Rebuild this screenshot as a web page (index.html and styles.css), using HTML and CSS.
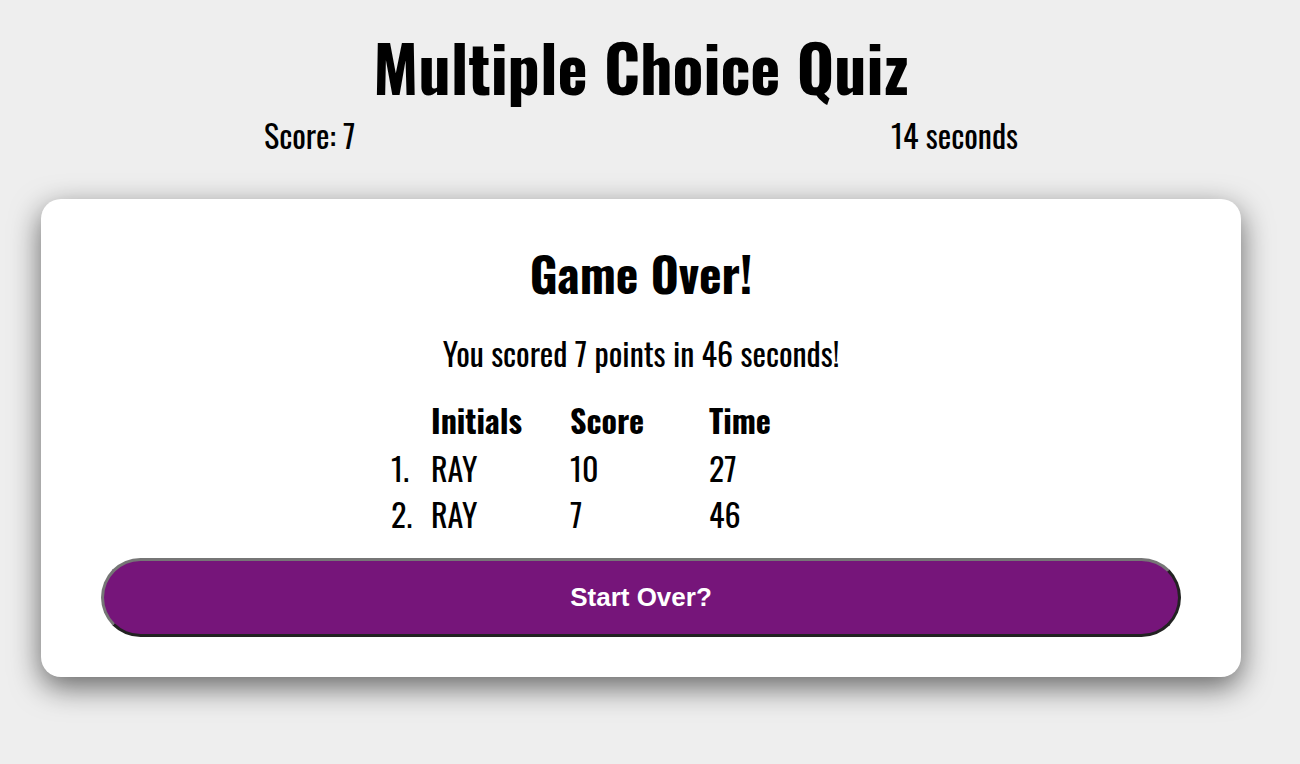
FILE: index.html
```html
<!DOCTYPE html>
<html lang="en">
<head>
<meta charset="utf-8">
<title>Multiple Choice Quiz</title>
<link rel="stylesheet" href="styles.css">
</head>
<body>
<div class="page">
  <header class="top">
    <h1 class="title">Multiple Choice Quiz</h1>
    <div class="status">
      <span class="score">Score: 7</span>
      <span class="timer">14 seconds</span>
    </div>
  </header>
  <main class="card">
    <h2 class="card-title">Game Over!</h2>
    <p class="summary">You scored 7 points in 46 seconds!</p>
    <div class="board">
      <div class="board-head">
        <span class="cell">Initials</span>
        <span class="cell">Score</span>
        <span class="cell">Time</span>
      </div>
      <ol class="board-list">
        <li class="board-row"><span class="cell">RAY</span><span class="cell">10</span><span class="cell">27</span></li>
        <li class="board-row"><span class="cell">RAY</span><span class="cell">7</span><span class="cell">46</span></li>
      </ol>
    </div>
    <button class="restart" type="button">Start Over?</button>
  </main>
</div>
</body>
</html>
```
FILE: styles.css
```css
html, body {
  margin: 0;
  padding: 0;
  background: #eeeeee;
}
body {
  font-family: "Oswald", "Roboto Condensed", sans-serif;
  color: #000;
}
.page {
  box-sizing: border-box;
  width: 1282px;
  min-height: 764px;
  padding-bottom: 80px;
  display: flex;
  flex-direction: column;
  align-items: center;
}
.top {
  display: flex;
  flex-direction: column;
  align-items: center;
}
.title {
  margin: 31px 0 0;
  font-size: 64px;
  font-weight: 700;
  line-height: 70px;
}
.status {
  width: 754px;
  display: flex;
  justify-content: space-between;
  font-size: 32px;
  font-weight: 400;
  line-height: 40px;
  margin-top: 14px;
}
.card {
  box-sizing: border-box;
  width: 1200px;
  margin-top: 44px;
  background: #fff;
  border-radius: 20px;
  box-shadow: 0 10px 30px rgba(0, 0, 0, 0.58);
  padding: 44px 60px 40px;
  display: flex;
  flex-direction: column;
  align-items: center;
}
.card-title {
  margin: 0;
  font-size: 48px;
  font-weight: 700;
  line-height: 60px;
}
.summary {
  margin: 30px 0 0;
  font-size: 32px;
  line-height: 40px;
}
.board {
  margin-top: 24px;
  margin-right: 3px;
  font-size: 32px;
  line-height: 46px;
}
.board-head {
  font-weight: 700;
  display: flex;
  margin-bottom: 2px;
}
.board-list {
  margin: 0;
  padding: 0;
  list-style: none;
  counter-reset: rank;
}
.board-row {
  display: flex;
  counter-increment: rank;
}
.board-row::before {
  content: counter(rank) ".";
  width: 40px;
  margin-left: -40px;
}
.cell {
  display: block;
  width: 139px;
}
.restart {
  box-sizing: border-box;
  width: 1080px;
  height: 79px;
  margin-top: 21px;
  border-radius: 40px;
  border: 3px solid;
  border-color: #767676 #222 #222 #767676;
  background: #76157a;
  color: #fff;
  font-family: "Liberation Sans", Arial, sans-serif;
  font-size: 26px;
  font-weight: 700;
}
```
